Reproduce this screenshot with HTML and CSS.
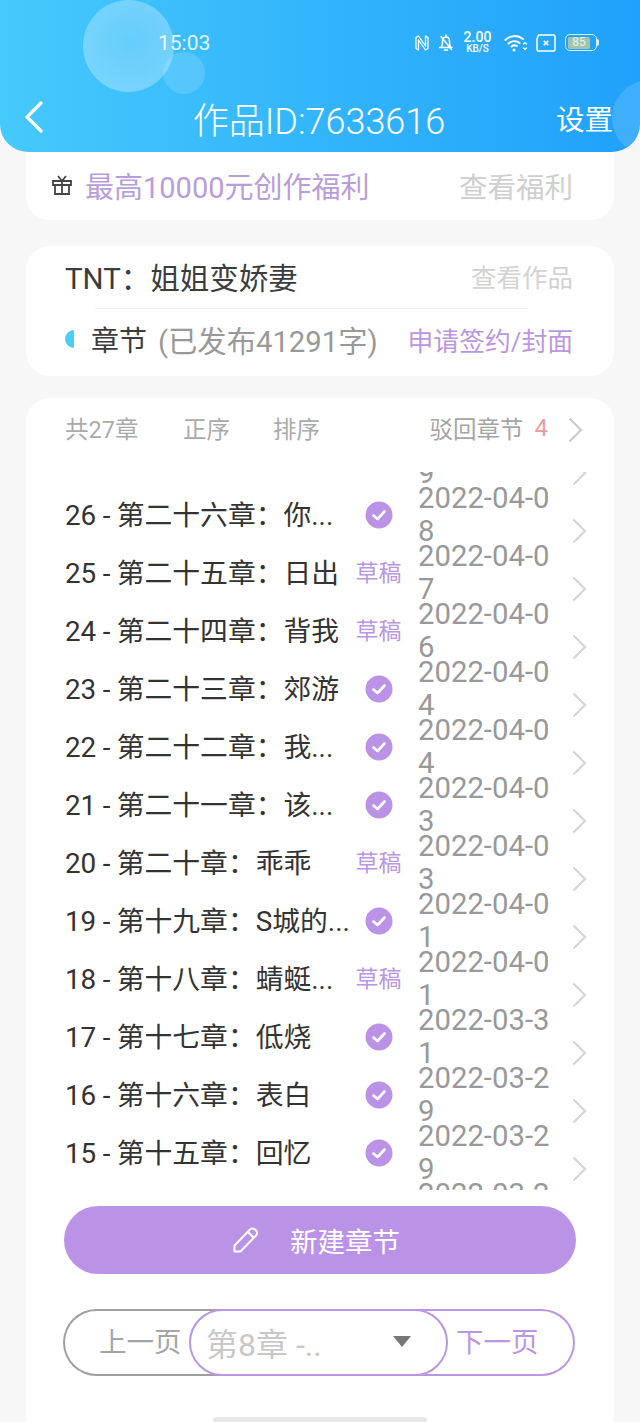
FILE: index.html
```html
<!DOCTYPE html>
<html>
<head lang="en">
    <meta charset="UTF-8">
    <title>作品</title>
    <link rel="stylesheet" href="styles.css">
</head>
<body>
<div class="page">
    <div class="header">
        <span class="bubble bubble-big"></span>
        <span class="bubble bubble-small"></span>
        <span class="bubble bubble-right"></span>
        <div class="status">
            <span class="time">15:03</span>
            <div class="status-icons">
                <svg class="ico-nfc" width="14" height="16" viewBox="0 0 14 16" fill="none" stroke="#fff" stroke-width="1.300" stroke-linejoin="round"><path d="M3.500 1 1 2.500v11l2.500 1.500V5l7 10 2.500-1.500v-11L10.500 1v10z"/></svg>
                <svg class="ico-bell" width="16" height="18" viewBox="0 0 16 18" fill="none" stroke="#fff" stroke-width="1.500" stroke-linecap="round" stroke-linejoin="round"><path d="M1.500 13.500h12.500M3 13.500c1.500-1.500 1.500-3 1.500-6C4.500 4.500 6 3 8 3s3.500 1.500 3.500 4.500c0 3 0 4.500 1.500 6M8 1v2M6.500 16h3M3 2.500l10.500 13"/></svg>
                <div class="speed"><span class="speed-num">2.00</span><span class="speed-unit">KB/S</span></div>
                <svg class="ico-wifi" width="24" height="18" viewBox="0 0 24 18" fill="none" stroke="#fff" stroke-width="2" stroke-linecap="round"><path d="M1.500 6C6.500 1 14 1 19 5M4.500 9.500c3.500-3 8-3 11-.5M7.500 12.500c2-1.500 4-1.500 5.500-.5"/><circle cx="10" cy="16" r="1.500" fill="#fff" stroke="none"/><path stroke-width="1.200" d="M19.500 10l1.500-1.500 1.500 1.500M19.500 14l1.500 1.500 1.500-1.500"/></svg>
                <svg class="ico-sim" width="20" height="18" viewBox="0 0 20 18" fill="none" stroke="#fff" stroke-width="1.500"><path d="M2.500 1h15a1.500 1.500 0 0 1 1.500 1.500v13a1.500 1.500 0 0 1-1.500 1.500h-15A1.500 1.500 0 0 1 1 15.500V5z" stroke-linejoin="round"/><path stroke-width="1.600" d="M7.700 6.700l4.600 4.600M12.300 6.700l-4.600 4.600"/></svg>
                <div class="battery"><div class="battery-body"><span class="battery-level">85</span></div><span class="battery-tip"></span></div>
            </div>
        </div>
        <div class="nav">
            <svg class="back" width="18" height="32" viewBox="0 0 18 32" fill="none" stroke="#fff" stroke-width="3.200" stroke-linecap="round" stroke-linejoin="round"><path d="M16 2 2 16l14 14"/></svg>
            <span class="nav-title">作品ID:7633616</span>
            <span class="nav-set">设置</span>
        </div>
    </div>

    <div class="card card-gift">
        <div class="gift-left">
            <svg class="gift-ico" width="22" height="22" viewBox="0 0 22 22" fill="none" stroke="#444" stroke-width="1.800"><path d="M2 7h18v4H2zM4 11v9h14v-9M11 7v13M7 2l4 5 4-5"/></svg>
            <span class="gift-text">最高10000元创作福利</span>
        </div>
        <span class="gift-link">查看福利</span>
    </div>

    <div class="card card-book">
        <div class="book-row">
            <span class="book-name">TNT：姐姐变娇妻</span>
            <span class="book-link">查看作品</span>
        </div>
        <div class="book-line"></div>
        <div class="book-row book-row2">
            <span class="dot"></span>
            <span class="book-ch">章节</span>
            <span class="book-count">(已发布41291字)</span>
            <span class="book-apply">申请签约/封面</span>
        </div>
    </div>

    <div class="card card-list">
        <div class="list-head">
            <span class="lh-total">共27章</span>
            <span class="lh-sort">正序</span>
            <span class="lh-sort">排序</span>
            <span class="lh-back">驳回章节</span>
            <span class="lh-num">4</span>
            <svg class="lh-arrow" width="15" height="26" viewBox="0 0 15 26" fill="none" stroke="#ccc" stroke-width="2.200"><path d="M1.500 1.500 13 13 1.500 24.500"/></svg>
        </div>

        <div class="list-box">
            <ul class="list">
                <li><span class="c-title">27 - 第二十七章：晚安</span><span class="c-state"><span class="draft">草稿</span></span><span class="c-date">2022-04-09</span><svg class="c-arrow" width="15" height="26" viewBox="0 0 15 26"><path d="M1.500 1.500 13 13 1.500 24.500"/></svg></li>
                <li><span class="c-title">26 - 第二十六章：你...</span><span class="c-state"><svg class="ok" width="28" height="28" viewBox="0 0 28 28"><circle cx="14" cy="14" r="13.500"/><path d="M8.500 14.500l4 3.500 7-7.500"/></svg></span><span class="c-date">2022-04-08</span><svg class="c-arrow" width="15" height="26" viewBox="0 0 15 26"><path d="M1.500 1.500 13 13 1.500 24.500"/></svg></li>
                <li><span class="c-title">25 - 第二十五章：日出</span><span class="c-state"><span class="draft">草稿</span></span><span class="c-date">2022-04-07</span><svg class="c-arrow" width="15" height="26" viewBox="0 0 15 26"><path d="M1.500 1.500 13 13 1.500 24.500"/></svg></li>
                <li><span class="c-title">24 - 第二十四章：背我</span><span class="c-state"><span class="draft">草稿</span></span><span class="c-date">2022-04-06</span><svg class="c-arrow" width="15" height="26" viewBox="0 0 15 26"><path d="M1.500 1.500 13 13 1.500 24.500"/></svg></li>
                <li><span class="c-title">23 - 第二十三章：郊游</span><span class="c-state"><svg class="ok" width="28" height="28" viewBox="0 0 28 28"><circle cx="14" cy="14" r="13.500"/><path d="M8.500 14.500l4 3.500 7-7.500"/></svg></span><span class="c-date">2022-04-04</span><svg class="c-arrow" width="15" height="26" viewBox="0 0 15 26"><path d="M1.500 1.500 13 13 1.500 24.500"/></svg></li>
                <li><span class="c-title">22 - 第二十二章：我...</span><span class="c-state"><svg class="ok" width="28" height="28" viewBox="0 0 28 28"><circle cx="14" cy="14" r="13.500"/><path d="M8.500 14.500l4 3.500 7-7.500"/></svg></span><span class="c-date">2022-04-04</span><svg class="c-arrow" width="15" height="26" viewBox="0 0 15 26"><path d="M1.500 1.500 13 13 1.500 24.500"/></svg></li>
                <li><span class="c-title">21 - 第二十一章：该...</span><span class="c-state"><svg class="ok" width="28" height="28" viewBox="0 0 28 28"><circle cx="14" cy="14" r="13.500"/><path d="M8.500 14.500l4 3.500 7-7.500"/></svg></span><span class="c-date">2022-04-03</span><svg class="c-arrow" width="15" height="26" viewBox="0 0 15 26"><path d="M1.500 1.500 13 13 1.500 24.500"/></svg></li>
                <li><span class="c-title">20 - 第二十章：乖乖</span><span class="c-state"><span class="draft">草稿</span></span><span class="c-date">2022-04-03</span><svg class="c-arrow" width="15" height="26" viewBox="0 0 15 26"><path d="M1.500 1.500 13 13 1.500 24.500"/></svg></li>
                <li><span class="c-title">19 - 第十九章：S城的...</span><span class="c-state"><svg class="ok" width="28" height="28" viewBox="0 0 28 28"><circle cx="14" cy="14" r="13.500"/><path d="M8.500 14.500l4 3.500 7-7.500"/></svg></span><span class="c-date">2022-04-01</span><svg class="c-arrow" width="15" height="26" viewBox="0 0 15 26"><path d="M1.500 1.500 13 13 1.500 24.500"/></svg></li>
                <li><span class="c-title">18 - 第十八章：蜻蜓...</span><span class="c-state"><span class="draft">草稿</span></span><span class="c-date">2022-04-01</span><svg class="c-arrow" width="15" height="26" viewBox="0 0 15 26"><path d="M1.500 1.500 13 13 1.500 24.500"/></svg></li>
                <li><span class="c-title">17 - 第十七章：低烧</span><span class="c-state"><svg class="ok" width="28" height="28" viewBox="0 0 28 28"><circle cx="14" cy="14" r="13.500"/><path d="M8.500 14.500l4 3.500 7-7.500"/></svg></span><span class="c-date">2022-03-31</span><svg class="c-arrow" width="15" height="26" viewBox="0 0 15 26"><path d="M1.500 1.500 13 13 1.500 24.500"/></svg></li>
                <li><span class="c-title">16 - 第十六章：表白</span><span class="c-state"><svg class="ok" width="28" height="28" viewBox="0 0 28 28"><circle cx="14" cy="14" r="13.500"/><path d="M8.500 14.500l4 3.500 7-7.500"/></svg></span><span class="c-date">2022-03-29</span><svg class="c-arrow" width="15" height="26" viewBox="0 0 15 26"><path d="M1.500 1.500 13 13 1.500 24.500"/></svg></li>
                <li><span class="c-title">15 - 第十五章：回忆</span><span class="c-state"><svg class="ok" width="28" height="28" viewBox="0 0 28 28"><circle cx="14" cy="14" r="13.500"/><path d="M8.500 14.500l4 3.500 7-7.500"/></svg></span><span class="c-date">2022-03-29</span><svg class="c-arrow" width="15" height="26" viewBox="0 0 15 26"><path d="M1.500 1.500 13 13 1.500 24.500"/></svg></li>
                <li><span class="c-title">14 - 第十四章：等待</span><span class="c-state"><span class="draft">草稿</span></span><span class="c-date">2022-03-27</span><svg class="c-arrow" width="15" height="26" viewBox="0 0 15 26"><path d="M1.500 1.500 13 13 1.500 24.500"/></svg></li>
            </ul>
        </div>

        <div class="new-btn">
            <svg class="new-ico" width="28" height="28" viewBox="0 0 28 28" fill="none" stroke="#fff" stroke-width="2" stroke-linejoin="round"><path d="M2.500 19.500 18 3.500c1.500-1.500 3-1.500 5 0l1 1c1.500 1.500 1.500 3.500 0 5L8.500 25.500h-6zM16 6l6 6"/></svg>
            <span>新建章节</span>
        </div>

        <div class="pager">
            <span class="pg-prev">上一页</span>
            <div class="pg-select">
                <span class="pg-text">第8章 -..</span>
                <span class="pg-tri"></span>
            </div>
            <span class="pg-next">下一页</span>
        </div>

        <div class="home-bar"></div>
    </div>
</div>
</body>
</html>
```
FILE: styles.css
```css
*{
    margin: 0;
    padding: 0;
    box-sizing: border-box;
}
ul{
    list-style: none;
}
html,body{
    height: 1422px;
    overflow: hidden;
}
body{
    background-color: #f7f7f7;
    font-family: Roboto, "Noto Sans CJK SC", sans-serif;
    color: #333;
}
.page{
    width: 640px;
    height: 1422px;
    overflow: hidden;
}

/* header */
.header{
    height: 152px;
    background: linear-gradient(90deg, #46c9fb, #20a1fb);
    border-radius: 0 0 28px 28px;
    position: relative;
    z-index: 2;
    overflow: hidden;
    color: #fff;
}
.bubble{
    position: absolute;
    border-radius: 50%;
    background: radial-gradient(circle at 50% 45%, rgba(255,255,255,.2), rgba(255,255,255,.33));
}
.bubble-big{
    left: 83px;
    top: 0;
    width: 91px;
    height: 92px;
}
.bubble-small{
    left: 163px;
    top: 52px;
    width: 42px;
    height: 42px;
    background: rgba(255,255,255,.14);
}
.bubble-right{
    left: 612px;
    top: 80px;
    width: 76px;
    height: 76px;
    background: rgba(255,255,255,.14);
}
.status{
    height: 84px;
    padding: 1px 41px 0 158px;
    display: flex;
    align-items: center;
    justify-content: space-between;
    position: relative;
}
.time{
    font-size: 21px;
    opacity: .85;
}
.status-icons{
    display: flex;
    align-items: center;
}
.ico-nfc{
    margin-right: 9px;
}
.ico-bell{
    margin-right: 8px;
}
.speed{
    width: 31px;
    margin-right: 11px;
    display: flex;
    flex-direction: column;
    align-items: center;
    font-weight: 500;
}
.speed-num{
    font-size: 14px;
    line-height: 13px;
}
.speed-unit{
    font-size: 10px;
    line-height: 10px;
}
.ico-wifi{
    margin-right: 8px;
}
.ico-sim{
    margin-right: 9px;
}
.battery{
    display: flex;
    align-items: center;
}
.battery-body{
    width: 32px;
    height: 17px;
    border: 1.5px solid #d8f0e8;
    border-radius: 5px;
    padding: 1.5px;
    display: flex;
}
.battery-level{
    width: 85%;
    background-color: #a3c4ab;
    border-radius: 2px;
    font-size: 12px;
    line-height: 11px;
    text-align: center;
    color: #e6f5ee;
}
.battery-tip{
    width: 2px;
    height: 7px;
    background-color: #d8f0e8;
    border-radius: 0 2px 2px 0;
}
.nav{
    height: 68px;
    padding: 0 27px 2px 25px;
    display: grid;
    grid-template-columns: 1fr auto 1fr;
    align-items: center;
    position: relative;
}
.nav-title{
    margin-top: 2px;
    font-size: 36px;
    font-weight: 300;
}
.nav-set{
    font-size: 28.500px;
    justify-self: end;
}

/* cards */
.card{
    width: 588px;
    margin: 0 auto;
    background-color: #fff;
    border-radius: 24px;
}
.card-gift{
    height: 98px;
    margin-top: -30px;
    padding: 28px 41px 0 25px;
    display: flex;
    align-items: center;
    justify-content: space-between;
}
.gift-left{
    display: flex;
    align-items: center;
}
.gift-ico{
    margin-right: 12px;
}
.gift-text{
    font-size: 29px;
    color: #b99ddb;
}
.gift-link{
    font-size: 28.500px;
    color: #cfcfcf;
}
.card-book{
    height: 130px;
    margin-top: 26px;
    padding: 0 41px 0 39px;
}
.book-row{
    height: 62px;
    padding-bottom: 2px;
    display: flex;
    align-items: center;
    justify-content: space-between;
}
.book-row2{
    height: 67px;
    padding-bottom: 7px;
    justify-content: flex-start;
}
.book-name{
    font-size: 29.500px;
    color: #3c3c3c;
}
.book-link{
    font-size: 25.500px;
    color: #d2d2d2;
    margin-bottom: 2px;
}
.book-line{
    height: 1px;
    margin: 0 45px 0 30px;
    background-color: #f2f2f2;
}
.dot{
    width: 9px;
    height: 18px;
    margin-right: 17px;
    border-radius: 9px 0 0 9px;
    background-color: #4ccdf3;
}
.book-ch{
    font-size: 28px;
    color: #3c3c3c;
}
.book-count{
    font-size: 29.300px;
    color: #999;
    margin-left: 11px;
}
.book-apply{
    font-size: 25.800px;
    color: #bb96e2;
    margin-left: auto;
}
.card-list{
    height: 1040px;
    margin-top: 22px;
    padding: 0 39px;
}
.list-head{
    height: 64px;
    padding-bottom: 4px;
    display: flex;
    align-items: center;
    font-size: 23.500px;
    color: #aaa;
}
.lh-total{
    width: 118px;
}
.lh-sort{
    width: 90px;
}
.lh-back{
    margin-left: auto;
    color: #a5a5a5;
}
.lh-num{
    margin-left: 11px;
    font-size: 24px;
    color: #ee9aa0;
}
.lh-arrow{
    margin: 4px -8px 0 20px;
}

/* chapter list */
.list-box{
    height: 718px;
    margin: 10px -20px 0 0;
    overflow: hidden;
}
.list{
    margin-top: -44px;
}
.list li{
    height: 58px;
    display: flex;
    align-items: center;
}
.c-title{
    width: 285px;
    padding-bottom: 4px;
    font-size: 27.800px;
    word-spacing: -.5px;
    color: #333;
    white-space: nowrap;
    flex-shrink: 0;
}
.c-state{
    width: 57px;
    display: flex;
    justify-content: center;
    flex-shrink: 0;
}
.draft{
    font-size: 23px;
    padding-bottom: 4px;
    color: #bb96e2;
}
.ok{
    fill: #bb93e6;
    display: block;
}
.ok path{
    fill: none;
    stroke: #fff;
    stroke-width: 2.600;
    stroke-linecap: round;
    stroke-linejoin: round;
}
.c-date{
    width: 140px;
    margin-left: 11px;
    font-size: 29.300px;
    line-height: 33px;
    color: #999;
    word-break: break-all;
    flex-shrink: 0;
}
.c-arrow{
    margin: 32px 0 0 14px;
    flex-shrink: 0;
    fill: none;
    stroke: #d6d6d6;
    stroke-width: 2.200;
}

/* bottom */
.new-btn{
    height: 68px;
    width: 512px;
    margin-top: 16px;
    margin-left: -1px;
    padding-right: 8px;
    border-radius: 34px;
    background-color: #bb93e6;
    color: #fff;
    font-size: 27.500px;
    display: flex;
    align-items: center;
    justify-content: center;
}
.new-ico{
    margin-right: 30px;
}
.pager{
    width: 512px;
    height: 67px;
    margin-top: 35px;
    margin-left: -2px;
    display: flex;
}
.pg-prev,.pg-next{
    height: 67px;
    font-size: 27.500px;
    line-height: 64px;
}
.pg-prev{
    width: 167px;
    padding-left: 34px;
    border: 2px solid #a0a0a0;
    border-right: 0;
    border-radius: 34px 0 0 34px;
    color: #a5a5a5;
}
.pg-select{
    width: 259px;
    height: 67px;
    margin-left: -41px;
    padding: 0 35px 0 15px;
    border: 2px solid #bb96e2;
    border-radius: 34px;
    background-color: #fff;
    display: flex;
    align-items: center;
    justify-content: space-between;
    position: relative;
}
.pg-text{
    margin-bottom: 2px;
    font-size: 32px;
    color: #c8c8c8;
}
.pg-tri{
    margin-bottom: 3px;
    border-left: 9px solid transparent;
    border-right: 9px solid transparent;
    border-top: 11px solid #777;
}
.pg-next{
    flex: 1;
    margin-left: -41px;
    padding-left: 49px;
    border: 2px solid #bb96e2;
    border-left: 0;
    border-radius: 0 34px 34px 0;
    color: #bb96e2;
}
.home-bar{
    width: 214px;
    height: 6px;
    margin: 41px auto 0;
    background-color: #e8e8e8;
    border-radius: 3px;
}
```
